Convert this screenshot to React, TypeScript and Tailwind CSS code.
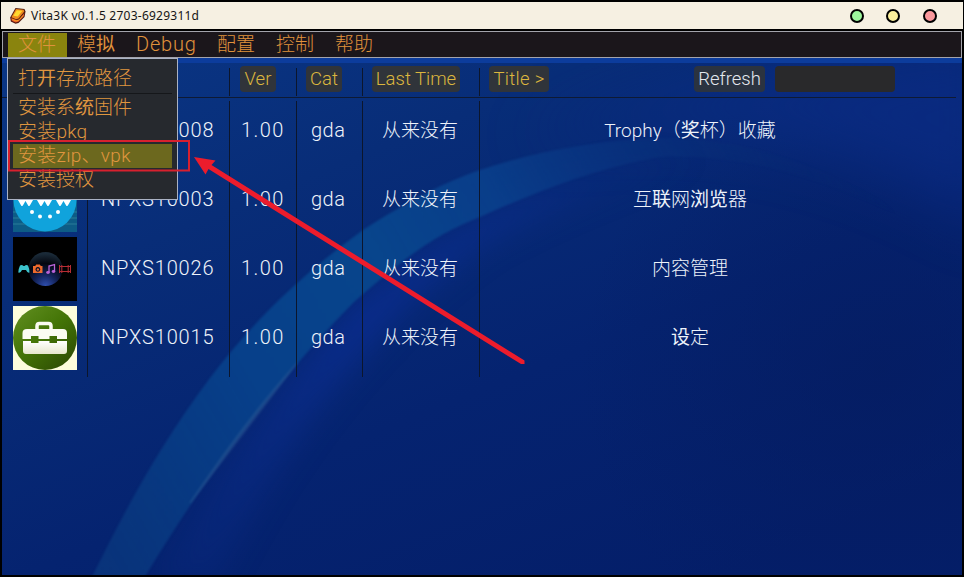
import React from "react";

const HEAVY = "奖联浏览统设开拟";

function Txt({ children }: { children: string }) {
  return (
    <>
      {Array.from(children).map((c, i) =>
        HEAVY.includes(c) ? (
          <span key={i} className="font-normal">{c}</span>
        ) : (
          <React.Fragment key={i}>{c}</React.Fragment>
        )
      )}
    </>
  );
}

function Logo() {
  return (
    <svg width="18" height="18" viewBox="0 0 18 18" className="shrink-0">
      <path d="M6.500 1 L15.5 2 L16.500 4.500 L15.5 10 L9.500 16 L6.5 16.800 L1.800 14.500 L1.200 10.500 Z" fill="#4e180f" />
      <path d="M2.200 11 L7.500 13 L10 12.500 L15.3 6 L14.600 9.600 L9.300 14.800 L6.5 15.5 L2.8 13.8 Z" fill="#e8552a" />
      <path d="M7 1.900 L14.600 2.800 L15.300 4.500 L9.600 11.600 L7 12.200 L2.400 10.200 Z" fill="#ee8a1e" />
      <path d="M7.800 3.200 L13.400 3.800 L8.700 9.600 L4.300 8.800 Z" fill="#ffd92e" />
      <path d="M3.200 12.400 L7.200 14 L9.600 13.300 L14.300 8.400" fill="none" stroke="#f9b81f" strokeWidth="0.8" />
    </svg>
  );
}

function BrowserIcon() {
  return (
    <svg width="64" height="64" viewBox="0 0 64 64" className="block">
      <rect width="64" height="64" fill="#0d5c86" />
      <path d="M0 44H64M0 50H64M0 56H64" stroke="#2b7d98" strokeWidth="1" />
      <circle cx="32" cy="32" r="31.500" fill="#10a3dc" />
      <path
        d="M5 30l4 7 3.500-6 3.500 6 4-7M24 30l4 7 3.500-6 3.500 6 4-7M43 30l4 7 3.500-6 3.500 6 4-7"
        fill="#fff" stroke="#fff" strokeWidth="2" strokeLinejoin="round"
      />
      <g fill="#fff">
        <circle cx="19" cy="44" r="2" />
        <circle cx="27" cy="48.500" r="2" />
        <circle cx="37" cy="48.500" r="2" />
        <circle cx="45" cy="44" r="2" />
      </g>
    </svg>
  );
}

function ContentIcon() {
  return (
    <svg width="64" height="64" viewBox="0 0 64 64" className="block">
      <defs>
        <radialGradient id="orb" cx="0.5" cy="1" r="0.95">
          <stop offset="0" stopColor="#2f4fb0" />
          <stop offset="0.35" stopColor="#14245c" />
          <stop offset="0.7" stopColor="#04060e" />
          <stop offset="1" stopColor="#1a2a38" />
        </radialGradient>
      </defs>
      <rect width="64" height="64" fill="#000" />
      <circle cx="32.500" cy="32" r="17" fill="url(#orb)" />
      <path d="M7 28.500q2-1 3.500.5h1q1.500-1.500 3.500-.5 1.500 3 1.500 7-2 .8-3.500-2.500h-4Q7.500 36.300 5.300 35.500 5.500 31.500 7 28.500z" fill="#3cc3cc" />
      <path fillRule="evenodd" d="M20 29h2.200l1-1.500h3.600l1 1.500H29.500v7H20zM24.900 30a2.400 2.400 0 1 0 .01 0zM24.900 31.300a1.200 1.200 0 1 1-.01 0z" fill="#ee6a2c" />
      <path d="M36 35.500V29l5.500-1.500v7" fill="none" stroke="#b963d8" strokeWidth="1.300" />
      <ellipse cx="35" cy="35.500" rx="1.800" ry="1.400" fill="#b963d8" />
      <ellipse cx="40.500" cy="34.500" rx="1.800" ry="1.400" fill="#b963d8" />
      <path d="M46.500 28v8M57.500 28v8M48.800 28v8M55.200 28v8M46.500 29.500h11M46.500 34.500h11" stroke="#b52c34" strokeWidth="1" />
    </svg>
  );
}

function SettingsIcon() {
  return (
    <svg width="64" height="64" viewBox="0 0 64 64" className="block">
      <defs>
        <linearGradient id="disc" x1="0.1" y1="0.1" x2="0.8" y2="0.9">
          <stop offset="0" stopColor="#5c8a1c" />
          <stop offset="0.5" stopColor="#437406" />
          <stop offset="1" stopColor="#315204" />
        </linearGradient>
        <linearGradient id="box" x1="0" y1="0" x2="0" y2="1">
          <stop offset="0" stopColor="#ffffff" />
          <stop offset="1" stopColor="#e6e7cc" />
        </linearGradient>
      </defs>
      <rect width="64" height="64" fill="#fdfddc" />
      <circle cx="32" cy="32" r="32" fill="url(#disc)" />
      <path d="M24 24V20q0-2.500 2.500-2.500h9q2.500 0 2.500 2.500v4" fill="none" stroke="#fafbf0" strokeWidth="3.500" />
      <path d="M14 23h36q4 0 4 4v6H44v-3h-7.500v3h-11v-3H18v3H9.500v-6q0-4 4.500-4z" fill="#fbfcf2" />
      <path d="M10 35h8v2h7.500V35h11v2H44V35h10v10q0 3-3 3H13q-3 0-3-3z" fill="url(#box)" />
    </svg>
  );
}

const rows = [
  { id: "NPXS10008", title: "Trophy（奖杯）收藏" },
  { id: "NPXS10003", title: "互联网浏览器" },
  { id: "NPXS10026", title: "内容管理" },
  { id: "NPXS10015", title: "设定" },
];

function Backdrop() {
  return (
    <svg className="absolute inset-0" width="960" height="517" viewBox="2 58 960 517">
      <defs>
        <linearGradient id="base" x1="0" y1="0" x2="0.75" y2="1">
          <stop offset="0" stopColor="#0a3685" />
          <stop offset="0.3" stopColor="#082d78" />
          <stop offset="0.65" stopColor="#052370" />
          <stop offset="1" stopColor="#041e69" />
        </linearGradient>
        <radialGradient id="shade" gradientUnits="userSpaceOnUse" cx="880" cy="370" r="300">
          <stop offset="0" stopColor="#051b5e" stopOpacity="0.6" />
          <stop offset="1" stopColor="#051b5e" stopOpacity="0" />
        </radialGradient>
        <linearGradient id="band" gradientUnits="userSpaceOnUse" x1="120" y1="575" x2="860" y2="150">
          <stop offset="0" stopColor="#0a387e" stopOpacity="0.8" />
          <stop offset="0.25" stopColor="#07408a" />
          <stop offset="0.45" stopColor="#08458c" />
          <stop offset="0.6" stopColor="#0a408c" stopOpacity="0.9" />
          <stop offset="0.72" stopColor="#0a3884" stopOpacity="0.65" />
          <stop offset="0.85" stopColor="#0a3078" stopOpacity="0.4" />
          <stop offset="1" stopColor="#0a2a70" stopOpacity="0" />
        </linearGradient>
        <linearGradient id="glow" gradientUnits="userSpaceOnUse" x1="160" y1="575" x2="700" y2="160">
          <stop offset="0" stopColor="#0a2a80" stopOpacity="0.3" />
          <stop offset="0.45" stopColor="#0a2c8c" stopOpacity="0.9" />
          <stop offset="0.7" stopColor="#0a2c88" stopOpacity="0.9" />
          <stop offset="1" stopColor="#0a2a80" stopOpacity="0" />
        </linearGradient>
        <filter id="soft" filterUnits="userSpaceOnUse" x="-100" y="-50" width="1200" height="800" colorInterpolationFilters="sRGB"><feGaussianBlur stdDeviation="14" /></filter>
        <filter id="haze" filterUnits="userSpaceOnUse" x="-200" y="-100" width="1400" height="800" colorInterpolationFilters="sRGB"><feGaussianBlur stdDeviation="30" /></filter>
        <filter id="edge" filterUnits="userSpaceOnUse" x="0" y="0" width="1000" height="620" colorInterpolationFilters="sRGB"><feGaussianBlur stdDeviation="0.8" /></filter>
      </defs>
      <rect x="2" y="58" width="960" height="517" fill="url(#base)" />
      <rect x="2" y="58" width="960" height="517" fill="url(#shade)" />
      <path d="M520 140Q660 80 1000 40V230Q800 110 600 130Z" fill="#0b2c86" opacity="0.7" filter="url(#haze)" />
      <path
        d="M150 585C217 463 297 363 353 305C413 250 480 215 560 183C620 165 660 157 720 156C650 172 570 200 490 240C400 300 290 420 215 585Z"
        fill="url(#glow)" filter="url(#soft)"
      />
      <path
        d="M88 585C130 500 160 445 210 378C255 318 310 268 363 230C410 200 445 182 480 170C540 150 600 140 660 138C760 138 850 175 962 250C860 190 760 152 660 157C600 167 540 190 480 217C440 233 413 250 353 303C297 360 217 455 140 585Z"
        fill="url(#band)" filter="url(#edge)"
      />
      <path d="M190 503Q247 418 297 363Q250 424 190 503Z" fill="#38649a" stroke="#38649a" strokeWidth="1.500" opacity="0.4" filter="url(#edge)" />
      <rect x="2" y="58" width="960" height="5" fill="#0c3c9c" />
    </svg>
  );
}

function Annotation() {
  return (
    <svg className="absolute inset-0" width="964" height="577" viewBox="0 0 964 577">
      <rect x="9" y="141" width="180" height="29.500" fill="none" stroke="#d8202e" strokeWidth="2" />
      <path d="M194 157L215.500 160.500L211.500 165L524.500 360.500V364H521L208.500 169L205.500 174.500Z" fill="#ec1c2c" />
    </svg>
  );
}

const chip = "flex h-[26px] items-center justify-center whitespace-nowrap rounded bg-[#30343a] pt-[2px] text-[18.5px] text-[#dcb63e]";

export default function App() {
  return (
    <div className="relative flex h-[577px] w-[964px] flex-col overflow-hidden bg-black px-[2px] pt-[2px] font-[Roboto,'Noto_Sans_CJK_SC',sans-serif] font-light">
      <header className="-mx-px flex h-[27px] shrink-0 items-center bg-[#f6f0e2] pl-2 pr-[26px]">
        <Logo />
        <span className="ml-[4px] flex-1 whitespace-nowrap font-['Noto_Sans','Open_Sans',sans-serif] text-[12px] font-normal tracking-[0.24px] text-[#151515]">
          Vita3K v0.1.5 2703-6929311d
        </span>
        <div className="flex gap-[22px]">
          <i className="size-[14px] rounded-full border-2 border-black bg-[#9cf59c]" />
          <i className="size-[14px] rounded-full border-2 border-black bg-[#fcf09c]" />
          <i className="ml-px size-[14px] rounded-full border-2 border-black bg-[#fa989c]" />
        </div>
      </header>

      <nav className="mt-[2px] flex h-[27px] shrink-0 border border-[#a3a3ab] bg-[#1b161b] pl-[5px] pt-px text-[19px] leading-[24px] text-[#e0923c]">
        <span className="h-[24px] w-[59px] bg-[#8a840e] pl-[10px]">文件</span>
        <span className="w-[59px] pl-[10px]"><Txt>模拟</Txt></span>
        <span className="w-[80px] pl-[10px] text-[20px] leading-[23px] tracking-[0.8px]">Debug</span>
        <span className="w-[60px] pl-[11px]">配置</span>
        <span className="w-[59px] pl-[10px]">控制</span>
        <span className="w-[60px] pl-[10px]">帮助</span>
      </nav>

      <main className="relative h-[517px] w-[960px] shrink-0">
        <Backdrop />
        <div className="relative">
          <div className="flex h-[40px] pt-[10px]">
            <div className="w-[227px]" />
            <div className="h-[28px] w-[67px] border-l border-[#0c162c] pl-[10px]"><div className={`${chip} -mt-[2px] w-[36px]`}>Ver</div></div>
            <div className="h-[28px] w-[66px] border-l border-[#0c162c] pl-[9px]"><div className={`${chip} -mt-[2px] w-[36px]`}>Cat</div></div>
            <div className="h-[28px] w-[117px] border-l border-[#0c162c] pl-[9px]"><div className={`${chip} -mt-[2px] w-[88px]`}>Last Time</div></div>
            <div className="flex h-[28px] border-l border-[#0c162c] pl-[9px]">
              <div className={`${chip} -mt-[2px] w-[60px] tracking-[0.3px]`}>Title &gt;</div>
              <div className="-mt-[2px] ml-[145px] flex h-[26px] w-[71px] items-center justify-center rounded bg-[#2b3340] pt-[2px] text-[18.5px] text-[#e4e8ee]">Refresh</div>
              <div className="-mt-[2px] ml-[10px] h-[26px] w-[120px] rounded bg-[#29292b]" />
            </div>
          </div>
          <div className="-mt-px mr-[6px] h-px bg-[#0e1a34]" />

          <div className="flex pt-px text-[19px] leading-[24px] text-[#eef3fa]">
            <div className="flex w-[85px] flex-col gap-[5px] pl-[11px]">
              <div className="size-[64px] bg-[#0d5c86]" />
              <BrowserIcon />
              <ContentIcon />
              <SettingsIcon />
            </div>
            <div className="mt-[2px] w-[142px] border-l border-[#0c162c] pl-[13px] text-[20px]">
              {rows.map((r) => <div key={r.id} className="h-[69px] pt-[17px] tracking-[0.85px]">{r.id}</div>)}
            </div>
            <div className="mt-[2px] w-[67px] border-l border-[#0c162c] pl-[11px] text-[20px]">
              {rows.map((r) => <div key={r.id} className="h-[69px] pt-[17px] tracking-[1.4px]">1.00</div>)}
            </div>
            <div className="mt-[2px] w-[66px] border-l border-[#0c162c] pl-[14px] text-[20px]">
              {rows.map((r) => <div key={r.id} className="h-[69px] pt-[17px] tracking-[0.5px]">gda</div>)}
            </div>
            <div className="mt-[2px] w-[117px] border-l border-[#0c162c] pl-[19px]">
              {rows.map((r) => <div key={r.id} className="h-[69px] pt-[18px]">从来没有</div>)}
            </div>
            <div className="mt-[2px] w-[421px] border-l border-[#0c162c] text-center">
              {rows.map((r) => <div key={r.id} className="h-[69px] pt-[18px]"><Txt>{r.title}</Txt></div>)}
            </div>
          </div>
        </div>
      </main>

      <div className="absolute left-[7px] top-[58px] h-[142px] w-[171px] border border-[#aab2c4] bg-[#26292e] px-[5px] pt-[7px] text-[19px] leading-[26px] text-[#e0963f]">
        <div className="h-[27px] pl-[5px]"><Txt>打开存放路径</Txt></div>
        <div className="mb-px h-px bg-[#15171a]" />
        <div className="h-[24px] pl-[5px]"><Txt>安装系统固件</Txt></div>
        <div className="h-[24px] pl-[5px] tracking-[0.2px]">安装pkg</div>
        <div className="mt-px h-[24px] bg-[#6c681e] pl-[5px] leading-[24px] tracking-[0.3px]">安装zip、vpk</div>
        <div className="h-[24px] pl-[5px] leading-[24px]">安装授权</div>
      </div>

      <Annotation />
    </div>
  );
}
